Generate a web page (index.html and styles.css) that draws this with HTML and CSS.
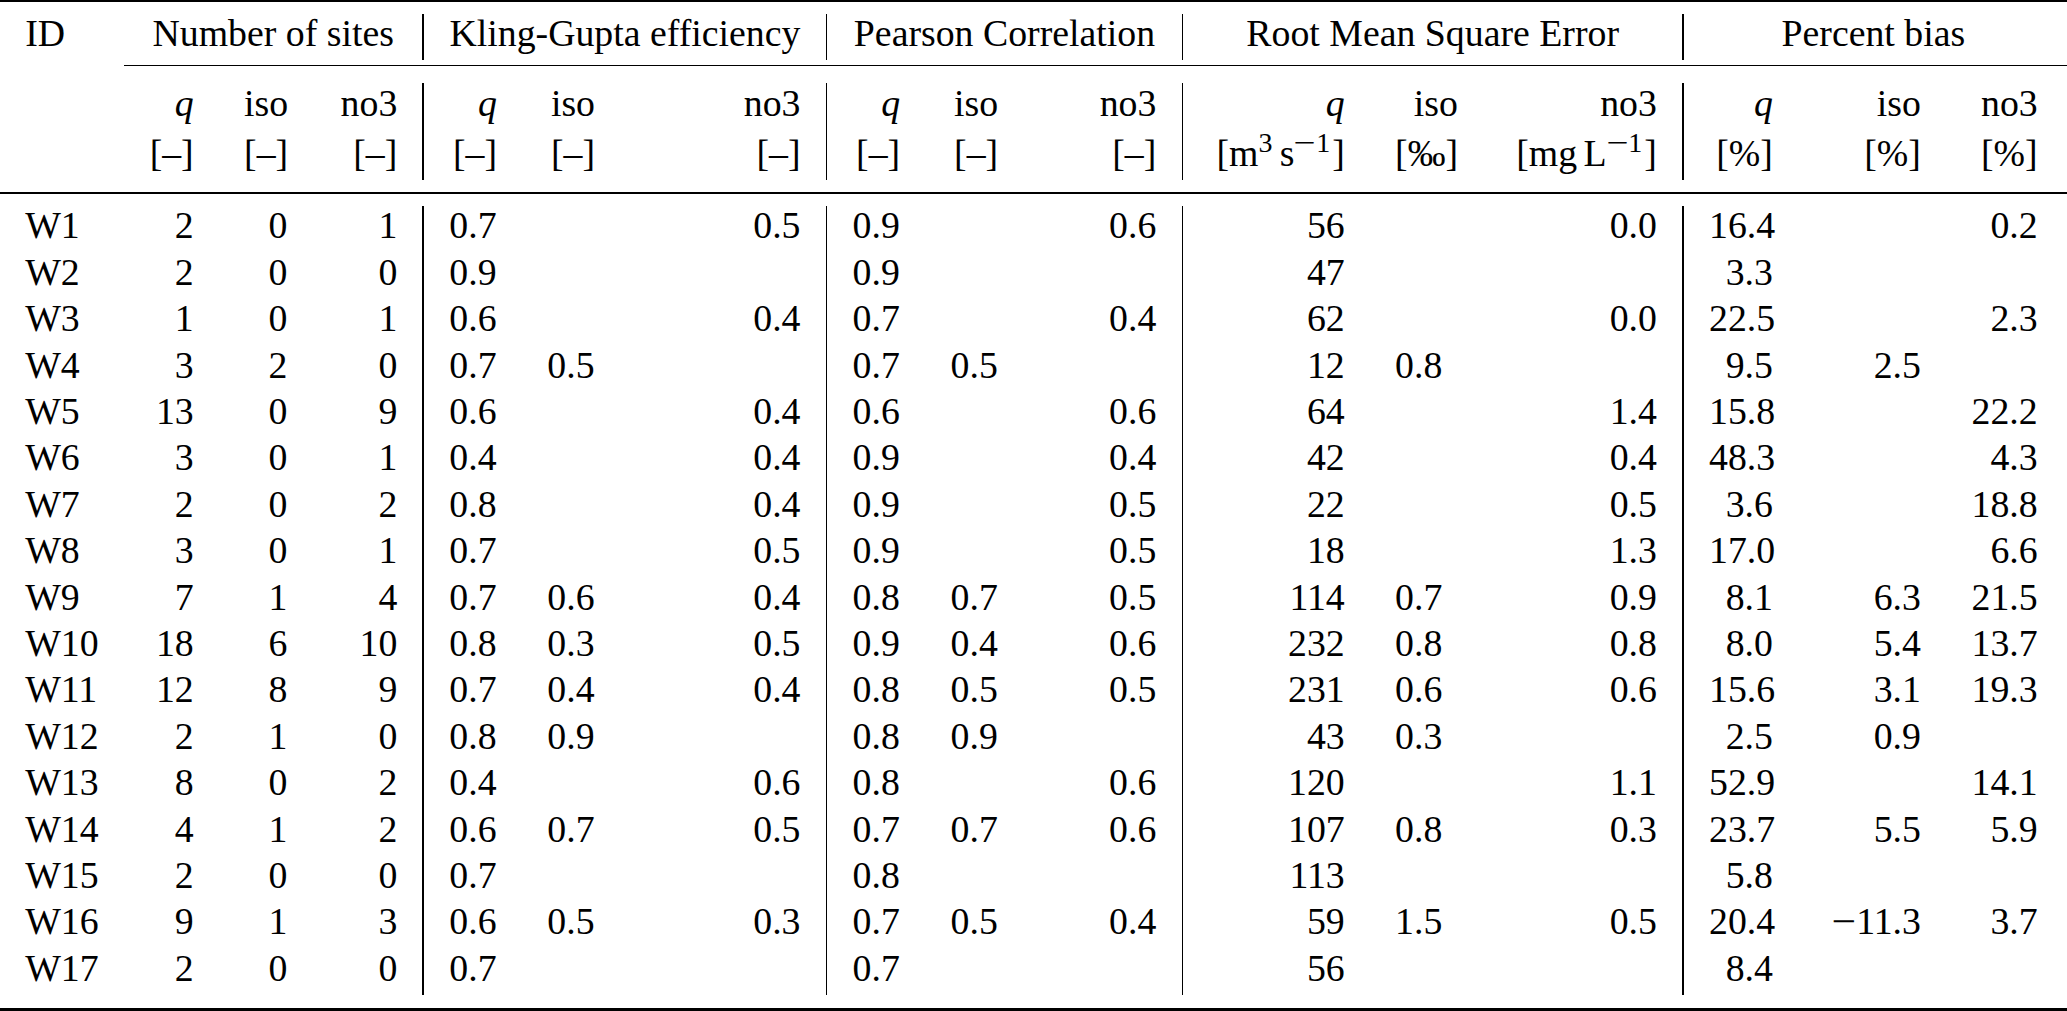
FILE: index.html
```html
<!DOCTYPE html>
<html>
<head>
<meta charset="utf-8">
<link rel="stylesheet" href="styles.css">
</head>
<body>
<div class="tbl">
  <div class="rule-top"></div>
  <div class="band head">
    <div class="vr v1"></div><div class="vr v2"></div><div class="vr v3"></div><div class="vr v4"></div>
    <div class="id">ID</div>
    <div class="g3">Number of sites</div>
    <div class="g3">Kling-Gupta efficiency</div>
    <div class="g3">Pearson Correlation</div>
    <div class="g3">Root Mean Square Error</div>
    <div class="g3">Percent bias</div>
  </div>
  <div class="cmid"></div>
  <div class="band sub">
    <div class="vr v1"></div><div class="vr v2"></div><div class="vr v3"></div><div class="vr v4"></div>
    <div class="id"></div>
    <div><i>q</i></div><div>iso</div><div>no3</div>
    <div><i>q</i></div><div>iso</div><div>no3</div>
    <div><i>q</i></div><div>iso</div><div>no3</div>
    <div><i>q</i></div><div>iso</div><div>no3</div>
    <div><i>q</i></div><div>iso</div><div>no3</div>
    <div class="id u"></div>
    <div class="u">[–]</div><div class="u">[–]</div><div class="u">[–]</div>
    <div class="u">[–]</div><div class="u">[–]</div><div class="u">[–]</div>
    <div class="u">[–]</div><div class="u">[–]</div><div class="u">[–]</div>
    <div class="u">[m<sup class="p">3</sup><span class="ts"></span>s<sup><span class="mn">−</span>1</sup>]</div><div class="u">[‰]</div><div class="u">[mg<span class="ts"></span>L<sup><span class="mn">−</span>1</sup>]</div>
    <div class="u">[%]</div><div class="u">[%]</div><div class="u">[%]</div>
  </div>
  <div class="rule-mid"></div>
  <div class="band body">
    <div class="vr v1"></div><div class="vr v2"></div><div class="vr v3"></div><div class="vr v4"></div>

    <div class="id">W1</div><div>2</div><div>0</div><div>1</div>
    <div class="l">0.7</div><div class="l"></div><div>0.5</div>
    <div class="l">0.9</div><div class="l"></div><div>0.6</div>
    <div>56</div><div class="l"></div><div>0.0</div>
    <div>16.4</div><div></div><div>0.2</div>

    <div class="id">W2</div><div>2</div><div>0</div><div>0</div>
    <div class="l">0.9</div><div class="l"></div><div></div>
    <div class="l">0.9</div><div class="l"></div><div></div>
    <div>47</div><div class="l"></div><div></div>
    <div>3.3</div><div></div><div></div>

    <div class="id">W3</div><div>1</div><div>0</div><div>1</div>
    <div class="l">0.6</div><div class="l"></div><div>0.4</div>
    <div class="l">0.7</div><div class="l"></div><div>0.4</div>
    <div>62</div><div class="l"></div><div>0.0</div>
    <div>22.5</div><div></div><div>2.3</div>

    <div class="id">W4</div><div>3</div><div>2</div><div>0</div>
    <div class="l">0.7</div><div class="l">0.5</div><div></div>
    <div class="l">0.7</div><div class="l">0.5</div><div></div>
    <div>12</div><div class="l">0.8</div><div></div>
    <div>9.5</div><div>2.5</div><div></div>

    <div class="id">W5</div><div>13</div><div>0</div><div>9</div>
    <div class="l">0.6</div><div class="l"></div><div>0.4</div>
    <div class="l">0.6</div><div class="l"></div><div>0.6</div>
    <div>64</div><div class="l"></div><div>1.4</div>
    <div>15.8</div><div></div><div>22.2</div>

    <div class="id">W6</div><div>3</div><div>0</div><div>1</div>
    <div class="l">0.4</div><div class="l"></div><div>0.4</div>
    <div class="l">0.9</div><div class="l"></div><div>0.4</div>
    <div>42</div><div class="l"></div><div>0.4</div>
    <div>48.3</div><div></div><div>4.3</div>

    <div class="id">W7</div><div>2</div><div>0</div><div>2</div>
    <div class="l">0.8</div><div class="l"></div><div>0.4</div>
    <div class="l">0.9</div><div class="l"></div><div>0.5</div>
    <div>22</div><div class="l"></div><div>0.5</div>
    <div>3.6</div><div></div><div>18.8</div>

    <div class="id">W8</div><div>3</div><div>0</div><div>1</div>
    <div class="l">0.7</div><div class="l"></div><div>0.5</div>
    <div class="l">0.9</div><div class="l"></div><div>0.5</div>
    <div>18</div><div class="l"></div><div>1.3</div>
    <div>17.0</div><div></div><div>6.6</div>

    <div class="id">W9</div><div>7</div><div>1</div><div>4</div>
    <div class="l">0.7</div><div class="l">0.6</div><div>0.4</div>
    <div class="l">0.8</div><div class="l">0.7</div><div>0.5</div>
    <div>114</div><div class="l">0.7</div><div>0.9</div>
    <div>8.1</div><div>6.3</div><div>21.5</div>

    <div class="id">W10</div><div>18</div><div>6</div><div>10</div>
    <div class="l">0.8</div><div class="l">0.3</div><div>0.5</div>
    <div class="l">0.9</div><div class="l">0.4</div><div>0.6</div>
    <div>232</div><div class="l">0.8</div><div>0.8</div>
    <div>8.0</div><div>5.4</div><div>13.7</div>

    <div class="id">W11</div><div>12</div><div>8</div><div>9</div>
    <div class="l">0.7</div><div class="l">0.4</div><div>0.4</div>
    <div class="l">0.8</div><div class="l">0.5</div><div>0.5</div>
    <div>231</div><div class="l">0.6</div><div>0.6</div>
    <div>15.6</div><div>3.1</div><div>19.3</div>

    <div class="id">W12</div><div>2</div><div>1</div><div>0</div>
    <div class="l">0.8</div><div class="l">0.9</div><div></div>
    <div class="l">0.8</div><div class="l">0.9</div><div></div>
    <div>43</div><div class="l">0.3</div><div></div>
    <div>2.5</div><div>0.9</div><div></div>

    <div class="id">W13</div><div>8</div><div>0</div><div>2</div>
    <div class="l">0.4</div><div class="l"></div><div>0.6</div>
    <div class="l">0.8</div><div class="l"></div><div>0.6</div>
    <div>120</div><div class="l"></div><div>1.1</div>
    <div>52.9</div><div></div><div>14.1</div>

    <div class="id">W14</div><div>4</div><div>1</div><div>2</div>
    <div class="l">0.6</div><div class="l">0.7</div><div>0.5</div>
    <div class="l">0.7</div><div class="l">0.7</div><div>0.6</div>
    <div>107</div><div class="l">0.8</div><div>0.3</div>
    <div>23.7</div><div>5.5</div><div>5.9</div>

    <div class="id">W15</div><div>2</div><div>0</div><div>0</div>
    <div class="l">0.7</div><div class="l"></div><div></div>
    <div class="l">0.8</div><div class="l"></div><div></div>
    <div>113</div><div class="l"></div><div></div>
    <div>5.8</div><div></div><div></div>

    <div class="id">W16</div><div>9</div><div>1</div><div>3</div>
    <div class="l">0.6</div><div class="l">0.5</div><div>0.3</div>
    <div class="l">0.7</div><div class="l">0.5</div><div>0.4</div>
    <div>59</div><div class="l">1.5</div><div>0.5</div>
    <div>20.4</div><div><span class="neg">−</span>11.3</div><div>3.7</div>

    <div class="id">W17</div><div>2</div><div>0</div><div>0</div>
    <div class="l">0.7</div><div class="l"></div><div></div>
    <div class="l">0.7</div><div class="l"></div><div></div>
    <div>56</div><div class="l"></div><div></div>
    <div>8.4</div><div></div><div></div>
  </div>
  <div class="rule-bot"></div>
</div>
</body>
</html>
```

FILE: styles.css
```css
html, body {
  margin: 0;
  padding: 0;
  background: #ffffff;
}

.tbl {
  width: 2067px;
  font-family: "Liberation Serif", "Times New Roman", serif;
  font-size: 37.8px;
  color: #000000;
}

.rule-top {
  height: 2px;
  background: #000000;
}

.band {
  display: grid;
  grid-template-columns:
    123.9px 95px 93.8px 109.8px
    1.7px 98px 98px 205.5px
    1.7px 98px 98px 158.2px
    1.7px 186.7px 113.2px 199px
    1.7px 114.3px 148px 116.8px;
  line-height: 46.4px;
}

.band > div {
  padding: 0 25.2px;
  text-align: right;
  white-space: nowrap;
}

.band > .id {
  text-align: left;
}

.band > .l {
  text-align: left;
}

.band > .g3 {
  grid-column: span 3;
  text-align: center;
}

.band > .vr {
  padding: 0;
  background: #000000;
  margin: 3.6px 0 -3.6px;
}

.v1 { grid-column: 5; }
.v2 { grid-column: 9; }
.v3 { grid-column: 13; }
.v4 { grid-column: 17; }

.head {
  margin-top: 8.1px;
}

.head .vr {
  grid-row: 1;
}

.cmid {
  margin: 8.7px 0 0 123.9px;
  height: 1px;
  background: #000000;
}

.sub {
  margin-top: 14.1px;
}

.sub .vr {
  grid-row: 1 / span 2;
  margin: 2.9px 0 -3.5px;
}

.sub > .u {
  padding-top: 3.6px;
}

.u sup {
  font-size: 0.74em;
  line-height: 0;
  vertical-align: 14px;
  padding-right: 2px;
}

.u sup.p {
  padding-right: 1px;
}

.ts {
  display: inline-block;
  width: 6.3px;
}

.mn {
  display: inline-block;
  margin: 0 3px;
  transform: scaleX(1.4);
}

.neg {
  display: inline-block;
  margin-right: 2px;
  transform: scaleX(1.15);
}

.rule-mid {
  margin-top: 15.5px;
  height: 2px;
  background: #000000;
}

.body {
  margin-top: 8.1px;
}

.body .vr {
  grid-row: 1 / span 17;
}

.rule-bot {
  margin-top: 17.1px;
  height: 3px;
  background: #000000;
}
```
